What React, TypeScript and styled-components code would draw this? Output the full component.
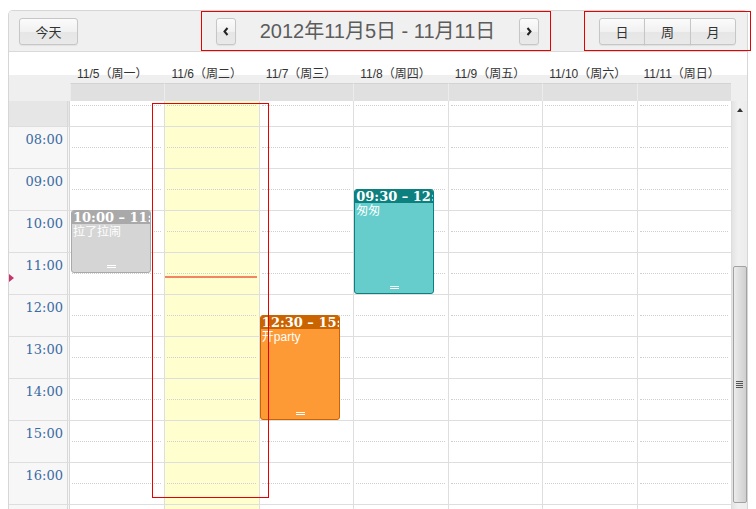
import React from 'react';
import styled, { createGlobalStyle } from 'styled-components';

const HOUR = 42;
const FIRST_HOUR = 7;
const TODAY = 1;

const days = [
  '11/5（周一）',
  '11/6（周二）',
  '11/7（周三）',
  '11/8（周四）',
  '11/9（周五）',
  '11/10（周六）',
  '11/11（周日）',
];

const hours = [7, 8, 9, 10, 11, 12, 13, 14, 15, 16, 17, 18];
// rows whose label sits inside the visible part of the scroller
const labelled = (h: number) => h > FIRST_HOUR && h < 17;

type Tone = 'gray' | 'teal' | 'orange';

const tones: Record<Tone, { head: string; body: string }> = {
  gray: { head: '#a9a9a9', body: '#d5d5d5' },
  teal: { head: '#0c7f7f', body: '#66cdcc' },
  orange: { head: '#c96400', body: '#fe9a36' },
};

const events: { day: number; start: number; end: number; time: string; title: string; tone: Tone }[] = [
  { day: 0, start: 10, end: 11.5, time: '10:00 – 11:30', title: '拉了拉闹', tone: 'gray' },
  { day: 3, start: 9.5, end: 12, time: '09:30 – 12:00', title: '匆匆', tone: 'teal' },
  { day: 2, start: 12.5, end: 15, time: '12:30 – 15:00', title: '开party', tone: 'orange' },
];

const NOW = 11.6;

const GlobalStyle = createGlobalStyle`
  html, body {
    margin: 0;
    padding: 0;
    background: #ffffff;
    overflow: hidden;
  }
  body {
    font-family: "Liberation Sans", "Noto Sans CJK SC", sans-serif;
  }
`;

const Page = styled.div`
  position: relative;
  height: 509px;
  padding: 10px 0 0 8px;
  box-sizing: border-box;
  overflow: hidden;
`;

const Calendar = styled.div`
  width: 740px;
  border: 1px solid #d6d6d6;
  border-bottom: none;
  border-radius: 5px 5px 0 0;
  overflow: hidden;
  box-sizing: border-box;
`;

const Toolbar = styled.div`
  display: grid;
  grid-template-columns: 1fr auto 1fr;
  align-items: center;
  height: 40px;
  padding: 0 11px 0 10px;
  background: #f0f0f0;
  border-bottom: 1px solid #d9d9d9;
`;

const Button = styled.button<{ $width: number }>`
  width: ${({ $width }) => $width}px;
  height: 27px;
  padding: 0;
  display: flex;
  align-items: center;
  justify-content: center;
  font-family: "Liberation Sans", "Noto Sans CJK SC", sans-serif;
  font-size: 13px;
  color: #333;
  background: linear-gradient(#fbfbfb, #f1f1f1 50%, #e6e6e6 51%, #e9e9e9);
  border: 1px solid #c6c6c6;
  border-radius: 3px;
  box-shadow: 0 1px 1px rgba(0, 0, 0, 0.06);
`;

const Left = styled.div`
  display: flex;
  justify-content: flex-start;
`;

const Right = styled.div`
  display: flex;
  justify-content: flex-end;
`;

const TitleGroup = styled.div`
  display: flex;
  align-items: center;
  gap: 24px;
`;

const Title = styled.h2`
  margin: 0;
  font-weight: normal;
  font-size: 20px;
  line-height: 24px;
  color: #5c5c5c;
  white-space: nowrap;
`;

const ButtonGroup = styled.div`
  display: flex;

  & > button {
    border-radius: 0;
    margin-left: -1px;
  }
  & > button:first-child {
    border-radius: 3px 0 0 3px;
    margin-left: 0;
  }
  & > button:last-child {
    border-radius: 0 3px 3px 0;
  }
`;

const HeadRow = styled.div`
  display: grid;
  grid-template-columns: 61px repeat(7, 1fr) 16px;
  height: 23px;
  background: #fff;
`;

const DayLabel = styled.div`
  padding: 15px 0 0 7px;
  font-size: 12px;
  line-height: 14px;
  color: #333;
  white-space: nowrap;
`;

const AllDayRow = styled.div`
  display: grid;
  grid-template-columns: 61px repeat(7, 1fr) 16px;
  height: 26px;
  padding-top: 8px;
  box-sizing: border-box;
  background: #efefef;
`;

const AllDayCell = styled.div`
  background: #e0e0e0;
  border-top: 1px solid #d3d3d3;
  border-left: 1px solid #ececec;
`;

const Body = styled.div`
  display: flex;
  height: 420px;
`;

const GridArea = styled.div`
  flex: 1;
  position: relative;
  overflow: hidden;
`;

const SlotStack = styled.div`
  position: relative;
  margin-top: -17px;
`;

const SlotRow = styled.div`
  display: grid;
  grid-template-columns: 61px repeat(7, 1fr);
  height: ${HOUR}px;
  box-sizing: border-box;
  border-top: 1px solid #dedede;
`;

const TimeLabel = styled.div<{ $muted?: boolean }>`
  position: relative;
  background: ${({ $muted }) => ($muted ? '#e6e6e6' : '#f7f7f7')};
  border-right: 3px double #d8d8d8;
  padding: 5px 4px 0 0;
  text-align: right;
  font-family: "DejaVu Serif", "Liberation Serif", serif;
  font-size: 13px;
  line-height: 16px;
  color: #3a6ba3;
`;

const SlotCell = styled.div<{ $today?: boolean }>`
  position: relative;
  background: ${({ $today }) => ($today ? '#fefecf' : '#fff')};
  border-left: 1px solid #dedede;

  &:nth-child(2) {
    border-left: none;
  }

  &::after {
    content: '';
    position: absolute;
    left: 2px;
    right: 3px;
    top: 20px;
    border-top: 1px dotted #cfcfcf;
  }
`;

const EventLayer = styled.div`
  position: absolute;
  top: 0;
  bottom: 0;
  left: 61px;
  right: 0;
  display: grid;
  grid-template-columns: repeat(7, 1fr);
  pointer-events: none;
`;

const DayColumn = styled.div`
  position: relative;
`;

const EventBox = styled.div<{ $tone: Tone }>`
  position: absolute;
  left: 1px;
  width: 80px;
  box-sizing: border-box;
  border: 1px solid ${({ $tone }) => tones[$tone].head};
  border-radius: 3px;
  background: ${({ $tone }) => tones[$tone].body};
  overflow: hidden;
  color: #fff;
`;

const EventTime = styled.div<{ $tone: Tone }>`
  height: 13px;
  padding-left: 1px;
  background: ${({ $tone }) => tones[$tone].head};
  font-family: "DejaVu Serif", "Liberation Serif", serif;
  font-weight: bold;
  font-size: 13px;
  line-height: 13px;
  white-space: nowrap;
  overflow: hidden;
`;

const EventTitle = styled.div`
  padding-left: 1px;
  font-size: 12px;
  line-height: 16px;
  white-space: nowrap;
`;

const Resizer = styled.div`
  position: absolute;
  bottom: 4px;
  left: 50%;
  width: 9px;
  height: 1px;
  margin-left: -4px;
  border-top: 1px solid #fff;
  border-bottom: 1px solid #fff;
`;

const NowLine = styled.div`
  position: absolute;
  left: 1px;
  right: 2px;
  height: 2px;
  background: #f4845f;
`;

const NowArrow = styled.div`
  position: absolute;
  left: 0;
  width: 0;
  height: 0;
  border-left: 5px solid #c7336b;
  border-top: 4px solid transparent;
  border-bottom: 4px solid transparent;
`;

const ScrollTrack = styled.div`
  width: 16px;
  box-sizing: border-box;
  background: linear-gradient(90deg, #e3e3e3, #f0f0f0 40%, #ececec);
  border-left: 1px solid #dddddd;
  display: flex;
  flex-direction: column;
  align-items: center;
`;

const ScrollArrow = styled.div`
  margin-top: 7px;
  width: 0;
  height: 0;
  border-left: 3px solid transparent;
  border-right: 3px solid transparent;
  border-bottom: 4px solid #333;
`;

const ScrollThumb = styled.div`
  margin-top: 154px;
  width: 14px;
  height: 237px;
  box-sizing: border-box;
  border: 1px solid #a2a2a2;
  border-radius: 2px;
  background: linear-gradient(90deg, #ececec, #dedede 45%, #cfcfcf);
  display: flex;
  align-items: center;
  justify-content: center;
`;

const Grip = styled.div`
  width: 7px;
  height: 7px;
  background: repeating-linear-gradient(#555 0 1px, transparent 1px 2px);
`;

const Annotation = styled.div`
  position: absolute;
  box-sizing: border-box;
  border: 1px solid #e60000;
  pointer-events: none;
`;

const Chevron = ({ dir }: { dir: 'left' | 'right' }) => (
  <svg width="6" height="9" viewBox="0 0 6 9">
    <polyline
      points={dir === 'left' ? '4.5,1 1.5,4.5 4.5,8' : '1.5,1 4.5,4.5 1.5,8'}
      fill="none"
      stroke="#222"
      strokeWidth="2"
    />
  </svg>
);

export default function App() {
  return (
    <Page>
      <GlobalStyle />
      <Calendar>
        <Toolbar>
          <Left>
            <Button $width={59}>今天</Button>
          </Left>
          <TitleGroup>
            <Button $width={20}>
              <Chevron dir="left" />
            </Button>
            <Title>2012年11月5日 - 11月11日</Title>
            <Button $width={20}>
              <Chevron dir="right" />
            </Button>
          </TitleGroup>
          <Right>
            <ButtonGroup>
              <Button $width={46}>日</Button>
              <Button $width={47}>周</Button>
              <Button $width={46}>月</Button>
            </ButtonGroup>
          </Right>
        </Toolbar>

        <HeadRow>
          <div />
          {days.map((d) => (
            <DayLabel key={d}>{d}</DayLabel>
          ))}
          <div />
        </HeadRow>

        <AllDayRow>
          <div />
          {days.map((d) => (
            <AllDayCell key={d} />
          ))}
          <div />
        </AllDayRow>

        <Body>
          <GridArea>
            <SlotStack>
              {hours.map((h) => (
                <SlotRow key={h}>
                  <TimeLabel $muted={h === FIRST_HOUR}>
                    {labelled(h) ? `${String(h).padStart(2, '0')}:00` : ''}
                  </TimeLabel>
                  {days.map((d, i) => (
                    <SlotCell key={d} $today={i === TODAY} />
                  ))}
                </SlotRow>
              ))}

              <NowArrow style={{ top: (NOW - FIRST_HOUR) * HOUR - 3.5 }} />

              <EventLayer>
                {days.map((d, i) => (
                  <DayColumn key={d}>
                    {i === TODAY && <NowLine style={{ top: (NOW - FIRST_HOUR) * HOUR - 1 }} />}
                    {events
                      .filter((e) => e.day === i)
                      .map((e) => (
                        <EventBox
                          key={e.title}
                          $tone={e.tone}
                          style={{
                            top: (e.start - FIRST_HOUR) * HOUR,
                            height: (e.end - e.start) * HOUR,
                          }}
                        >
                          <EventTime $tone={e.tone}>{e.time}</EventTime>
                          <EventTitle>{e.title}</EventTitle>
                          <Resizer />
                        </EventBox>
                      ))}
                  </DayColumn>
                ))}
              </EventLayer>
            </SlotStack>
          </GridArea>
          <ScrollTrack>
            <ScrollArrow />
            <ScrollThumb>
              <Grip />
            </ScrollThumb>
          </ScrollTrack>
        </Body>
      </Calendar>

      <Annotation style={{ left: 201, top: 11, width: 350, height: 40 }} />
      <Annotation style={{ left: 584, top: 11, width: 167, height: 40 }} />
      <Annotation style={{ left: 152, top: 103, width: 117, height: 395 }} />
    </Page>
  );
}
